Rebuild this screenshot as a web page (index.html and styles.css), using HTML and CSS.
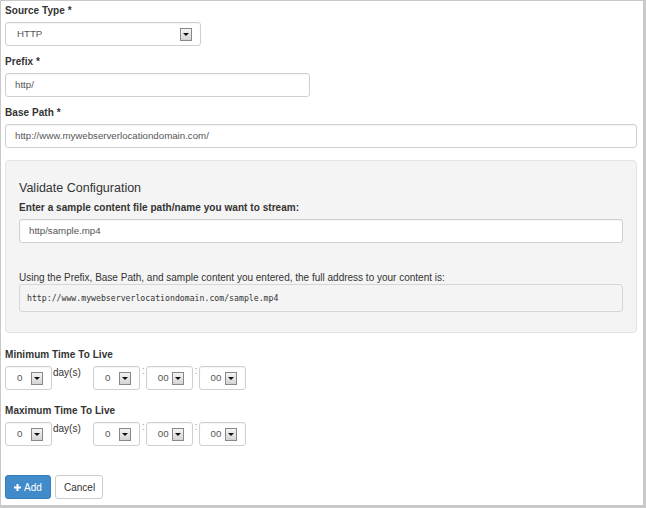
FILE: index.html
```html
<!DOCTYPE html>
<html>
<head>
<meta charset="utf-8">
<link rel="stylesheet" href="styles.css">
</head>
<body>
<div class="frame">
  <div class="group">
    <div class="label">Source Type *</div>
    <div class="field select w-source"><span class="val">HTTP</span><span class="arrow"></span></div>
  </div>
  <div class="group">
    <div class="label">Prefix *</div>
    <div class="field w-prefix"><span class="val">http/</span></div>
  </div>
  <div class="group">
    <div class="label">Base Path *</div>
    <div class="field"><span class="val">http://www.mywebserverlocationdomain.com/</span></div>
  </div>

  <div class="well">
    <h4 class="well-title">Validate Configuration</h4>
    <div class="label">Enter a sample content file path/name you want to stream:</div>
    <div class="field"><span class="val">http/sample.mp4</span></div>
    <p class="note">Using the Prefix, Base Path, and sample content you entered, the full address to your content is:</p>
    <pre class="code">http://www.mywebserverlocationdomain.com/sample.mp4</pre>
  </div>

  <div class="ttl">
    <div class="label">Minimum Time To Live</div>
    <div class="time-row">
      <div class="field select tsel"><span class="val">0</span><span class="arrow"></span></div>
      <span class="unit">day(s)</span>
      <div class="field select tsel hours"><span class="val">0</span><span class="arrow"></span></div>
      <span class="colon">:</span>
      <div class="field select tsel"><span class="val">00</span><span class="arrow"></span></div>
      <span class="colon">:</span>
      <div class="field select tsel"><span class="val">00</span><span class="arrow"></span></div>
    </div>
  </div>
  <div class="ttl">
    <div class="label">Maximum Time To Live</div>
    <div class="time-row">
      <div class="field select tsel"><span class="val">0</span><span class="arrow"></span></div>
      <span class="unit">day(s)</span>
      <div class="field select tsel hours"><span class="val">0</span><span class="arrow"></span></div>
      <span class="colon">:</span>
      <div class="field select tsel"><span class="val">00</span><span class="arrow"></span></div>
      <span class="colon">:</span>
      <div class="field select tsel"><span class="val">00</span><span class="arrow"></span></div>
    </div>
  </div>

  <div class="actions">
    <button class="btn btn-primary"><svg class="plus" width="7" height="7" viewBox="0 0 7 7"><path d="M2.5 0h2v2.5H7v2H4.5V7h-2V4.5H0v-2h2.5z" fill="#fff"/></svg>Add</button>
    <button class="btn btn-default">Cancel</button>
  </div>
</div>
</body>
</html>
```

FILE: styles.css
```css
html, body {
  margin: 0;
  padding: 0;
  background: #fff;
}

body {
  font-family: "Liberation Sans", Arial, sans-serif;
  font-size: 10px;
  line-height: 14px;
  color: #333;
}

.frame {
  box-sizing: border-box;
  width: 646px;
  height: 508px;
  border-style: solid;
  border-color: #c9c9c9;
  border-width: 1px 3px 3px 1px;
  padding: 3px 6px 0 4px;
  overflow: hidden;
}

.group {
  margin-bottom: 9px;
}

.label {
  display: block;
  font-weight: bold;
  line-height: 14px;
  margin-bottom: 4px;
  color: #333;
  letter-spacing: 0.05px;
}

.field {
  box-sizing: border-box;
  height: 24px;
  border: 1px solid #cfcfcf;
  border-radius: 3px;
  background: #fff;
  color: #555;
  font-size: 9.7px;
  display: flex;
  align-items: center;
  padding: 0 9px;
  box-shadow: inset 0 1px 1px rgba(0, 0, 0, 0.04);
}

.w-source {
  width: 196px;
  padding-left: 11px;
}

.w-prefix {
  width: 305px;
}

.select .val {
  flex: 1;
}

.select {
  padding-right: 8px;
}

.arrow {
  box-sizing: border-box;
  width: 12px;
  height: 13px;
  border: 1px solid #888;
  background: linear-gradient(#f4f4f4, #d4d4d4);
  display: flex;
  align-items: center;
  justify-content: center;
}

.arrow::after {
  content: "";
  width: 0;
  height: 0;
  border-left: 3px solid transparent;
  border-right: 3px solid transparent;
  border-top: 3px solid #111;
}

.well {
  margin-top: 12px;
  background: #f4f4f4;
  border: 1px solid #e3e3e3;
  border-radius: 4px;
  padding: 13px;
}

.well-title {
  margin: 7px 0 6px;
  font-size: 12.5px;
  line-height: 14px;
  font-weight: normal;
  color: #333;
}

.note {
  margin: 28px 0 0;
  line-height: 13px;
  color: #333;
}

.code {
  margin: 0 0 7px;
  box-sizing: border-box;
  height: 28px;
  padding: 7px 7px;
  background: #f4f4f4;
  border: 1px solid #d6d6d6;
  border-radius: 3px;
  font-family: "DejaVu Sans Mono", "Liberation Mono", monospace;
  font-size: 8.2px;
  line-height: 13px;
  color: #333;
}

.ttl {
  margin-top: 15px;
}

.ttl + .ttl {
  margin-top: 14px;
}

.time-row {
  display: flex;
  align-items: flex-start;
}

.tsel {
  width: 47px;
  padding-left: 11px;
}

.unit {
  margin-left: 1px;
  width: 40px;
  color: #333;
}

.colon {
  color: #999;
  line-height: 10px;
  margin: 0 1px 0 2px;
}

.actions {
  margin-top: 29px;
  display: flex;
  gap: 4px;
}

.btn {
  box-sizing: border-box;
  height: 24px;
  border-radius: 3px;
  font-family: "Liberation Sans", Arial, sans-serif;
  font-size: 10px;
  padding: 0 8px;
  display: flex;
  align-items: center;
  cursor: pointer;
}

.btn-primary {
  background: #428bca;
  border: 1px solid #357ebd;
  color: #fff;
  width: 46px;
}

.plus {
  margin-right: 3px;
}

.btn-default {
  background: #fff;
  border: 1px solid #ccc;
  color: #333;
  width: 48px;
}
```
